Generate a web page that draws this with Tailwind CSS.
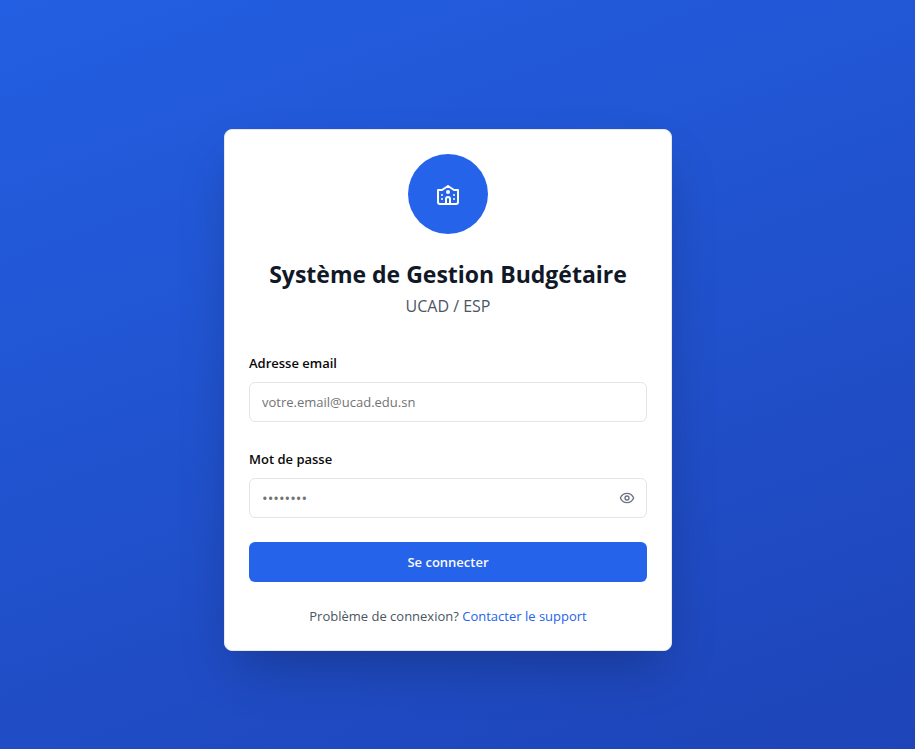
<!DOCTYPE html>
<html lang="fr">
<head>
<meta charset="utf-8">
<meta name="viewport" content="width=device-width, initial-scale=1">
<title>Système de Gestion Budgétaire</title>
<script src="https://cdn.jsdelivr.net/npm/@tailwindcss/browser@4"></script>
</head>
<body class="font-['Segoe_UI','Open_Sans','Noto_Sans',sans-serif]">
<main class="flex min-h-screen items-center justify-center bg-linear-160/srgb from-[#235fe2] to-[#1e44b8] pt-[47px] pr-[35px] pb-4 pl-4">
  <section class="w-full max-w-md rounded-lg border border-gray-200 bg-white p-6 shadow-2xl">
    <header class="text-center">
      <div class="mx-auto mb-6 flex size-20 items-center justify-center rounded-full bg-[#2563eb]">
        <svg class="size-6 text-white" viewBox="0 0 24 24" fill="none" stroke="currentColor" stroke-width="2" stroke-linecap="round" stroke-linejoin="round" aria-hidden="true">
          <circle cx="12" cy="10" r="1"/>
          <path d="M22 20V8h-4l-6-4-6 4H2v12a2 2 0 0 0 2 2h16a2 2 0 0 0 2-2"/>
          <path d="M6 17v.01"/><path d="M6 13v.01"/><path d="M18 17v.01"/><path d="M18 13v.01"/>
          <path d="M14 22v-5a2 2 0 0 0-2-2a2 2 0 0 0-2 2v5"/>
        </svg>
      </div>
      <h1 class="text-[23px] leading-8 font-bold whitespace-nowrap text-[#111827]">Système de Gestion Budgétaire</h1>
      <p class="mt-1 text-base leading-6 text-[#4b5563]">UCAD / ESP</p>
    </header>
    <form class="mt-8 flex flex-col gap-6">
      <div>
        <label for="email" class="mb-1.5 block text-[13px] leading-[26px] font-semibold text-[#0a0a0a]">Adresse email</label>
        <input id="email" type="email" placeholder="votre.email@ucad.edu.sn" class="h-10 w-full rounded-md border border-[#e5e5e5] bg-white px-3 text-[13px] placeholder:text-[#737373]">
      </div>
      <div>
        <label for="password" class="mb-1.5 block text-[13px] leading-[26px] font-semibold text-[#0a0a0a]">Mot de passe</label>
        <div class="relative">
          <input id="password" type="password" placeholder="••••••••" class="h-10 w-full rounded-md border border-[#e5e5e5] bg-white pr-10 pl-3 text-[15px] placeholder:text-[#737373]">
          <button type="button" aria-label="Afficher le mot de passe" class="absolute inset-y-0 right-0 flex items-center px-3 text-[#6b7280]">
            <svg class="size-4" viewBox="0 0 24 24" fill="none" stroke="currentColor" stroke-width="2" stroke-linecap="round" stroke-linejoin="round" aria-hidden="true">
              <path d="M2 12s3-7 10-7 10 7 10 7-3 7-10 7-10-7-10-7Z"/>
              <circle cx="12" cy="12" r="3"/>
            </svg>
          </button>
        </div>
      </div>
      <button type="submit" class="h-10 w-full rounded-md bg-[#2563eb] pt-0.5 text-[13px] font-semibold text-[#fafafa]">Se connecter</button>
    </form>
    <p class="mt-6 text-center text-[13px] leading-5 text-[#4b5563]">Problème de connexion? <a href="#" class="text-[#2563eb]">Contacter le support</a></p>
  </section>
</main>
</body>
</html>
